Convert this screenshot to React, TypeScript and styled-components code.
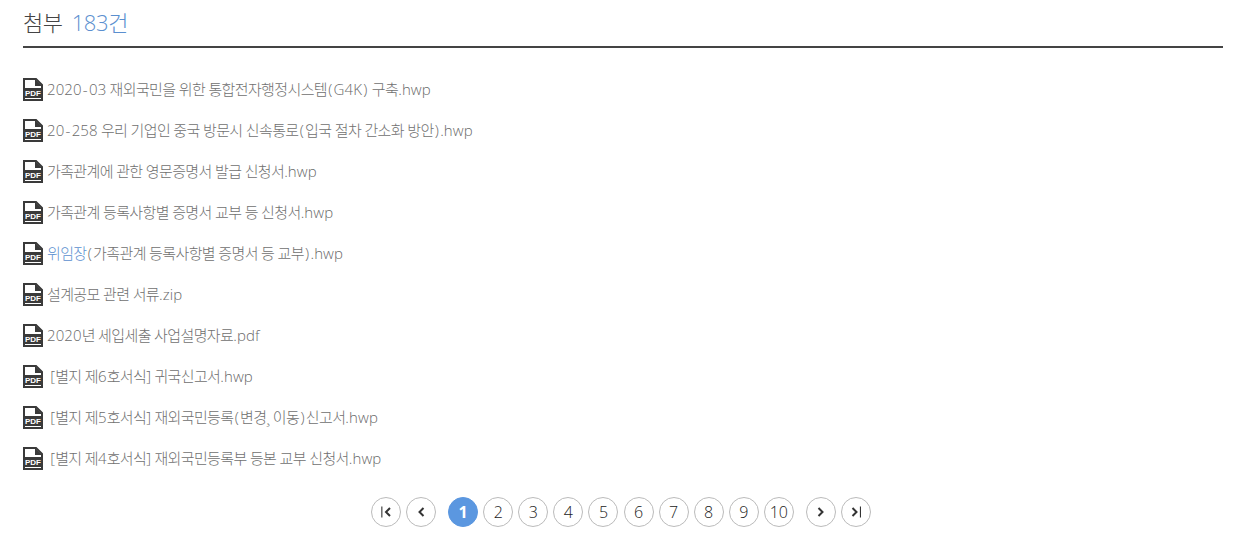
import React from "react";
import styled, { createGlobalStyle } from "styled-components";

const GlobalStyle = createGlobalStyle`
  html, body {
    margin: 0;
    padding: 0;
    background: #ffffff;
  }
`;

const Page = styled.div`
  box-sizing: border-box;
  width: 1243px;
  height: 546px;
  padding: 0 20px 0 23px;
  font-family: "Open Sans", "Noto Sans CJK KR", sans-serif;
  overflow: hidden;
`;

const Header = styled.h2`
  box-sizing: border-box;
  height: 48px;
  margin: 0;
  padding-top: 6px;
  border-bottom: 2px solid #444444;
  color: #444444;
  font-size: 22px;
  font-weight: 300;
  line-height: 32px;
  letter-spacing: -0.4px;
`;

const Count = styled.span`
  margin-left: 9px;
  color: #5b8fcf;
`;

const FileList = styled.ul`
  list-style: none;
  margin: 0;
  padding: 21px 0 0;
`;

const FileRow = styled.li`
  display: flex;
  align-items: center;
  gap: 4px;
  height: 41px;
  color: #707070;
  font-size: 15px;
  font-weight: 300;
`;

const FileName = styled.span`
  position: relative;
  top: -1px;
  white-space: pre;
  letter-spacing: -0.62px;
`;

const Latin = styled.span`
  color: #6a6a6a;
  letter-spacing: 0.1px;
`;

const Wide = styled(Latin)`
  padding: 0 1.2px;
`;

const Highlight = styled.span`
  color: #5b8fcf;
`;

const Pager = styled.nav`
  display: flex;
  justify-content: center;
  align-items: center;
  gap: 5.08px;
  margin-top: 18px;
  padding-right: 4px;
`;

const PageButton = styled.span<{ $active?: boolean }>`
  box-sizing: border-box;
  display: flex;
  align-items: center;
  justify-content: center;
  width: 30px;
  height: 30px;
  border: 1px solid ${(p) => (p.$active ? "#5b97e0" : "#bbbbbb")};
  border-radius: 50%;
  background: ${(p) => (p.$active ? "#5b97e0" : "#ffffff")};
  color: ${(p) => (p.$active ? "#ffffff" : "#222222")};
  font-size: 16px;
  font-weight: ${(p) => (p.$active ? 700 : 300)};
`;

const Spacer = styled.span`
  width: 7.4px;
  margin-left: -5px;
`;

const FileIcon = () => (
  <svg width="20" height="23" viewBox="0 0 20 23" style={{ flex: "none" }}>
    <path
      d="M1 1H13L19 7V22H1Z"
      fill="#fff"
      stroke="#3a3a3a"
      strokeWidth="2"
    />
    <path d="M12 1V8H19Z" fill="#3a3a3a" />
    <rect x="0" y="10" width="20" height="10" fill="#3a3a3a" />
    <text
      x="10"
      y="18"
      textAnchor="middle"
      fill="#fff"
      fontFamily="'Liberation Sans', sans-serif"
      fontSize="8"
      fontWeight="700"
    >
      PDF
    </text>
  </svg>
);

const Chevron = ({ dir, bar }: { dir: "left" | "right"; bar?: boolean }) => (
  <svg width="14" height="14" viewBox="0 0 14 14">
    {dir === "left" ? (
      <>
        <path
          d={bar ? "M11 3L7 7L11 11" : "M9.5 3L5.5 7L9.5 11"}
          fill="none"
          stroke="#333"
          strokeWidth="2"
        />
        {bar && <rect x="2.3" y="1.5" width="1.1" height="11" fill="#333" />}
      </>
    ) : (
      <>
        <path
          d={bar ? "M3.5 3L7.5 7L3.5 11" : "M4.5 3L8.5 7L4.5 11"}
          fill="none"
          stroke="#333"
          strokeWidth="2"
        />
        {bar && <rect x="10.9" y="1.5" width="1.1" height="11" fill="#333" />}
      </>
    )}
  </svg>
);

// Latin runs are set wider than the Hangul around them
const Mixed = ({ text }: { text: string }) => (
  <>
    {text.split(/([^\uAC00-\uD7A3\s]+)/).map((part, i) =>
      i % 2
        ? part.split(/([()\-])/).map((run, j) =>
            j % 2 ? <Wide key={`${i}-${j}`}>{run}</Wide> : <Latin key={`${i}-${j}`}>{run}</Latin>
          )
        : part
    )}
  </>
);

const files: { prefix?: string; name: string }[] = [
  { name: "2020-03 재외국민을 위한 통합전자행정시스템(G4K) 구축.hwp" },
  { name: "20-258 우리 기업인 중국 방문시 신속통로(입국 절차 간소화 방안).hwp" },
  { name: "가족관계에 관한 영문증명서 발급 신청서.hwp" },
  { name: "가족관계 등록사항별 증명서 교부 등 신청서.hwp" },
  { prefix: "위임장", name: "(가족관계 등록사항별 증명서 등 교부).hwp" },
  { name: "설계공모 관련 서류.zip" },
  { name: "2020년 세입세출 사업설명자료.pdf" },
  { name: " [별지 제6호서식] 귀국신고서.hwp" },
  { name: " [별지 제5호서식] 재외국민등록(변경¸ 이동)신고서.hwp" },
  { name: " [별지 제4호서식] 재외국민등록부 등본 교부 신청서.hwp" },
];

const pages = [1, 2, 3, 4, 5, 6, 7, 8, 9, 10];

export default function App() {
  return (
    <Page>
      <GlobalStyle />
      <Header>
        첨부<Count>183건</Count>
      </Header>
      <FileList>
        {files.map((file, i) => (
          <FileRow key={i}>
            <FileIcon />
            <FileName>
              {file.prefix && <Highlight>{file.prefix}</Highlight>}
              <Mixed text={file.name} />
            </FileName>
          </FileRow>
        ))}
      </FileList>
      <Pager>
        <PageButton>
          <Chevron dir="left" bar />
        </PageButton>
        <PageButton>
          <Chevron dir="left" />
        </PageButton>
        <Spacer />
        {pages.map((n) => (
          <PageButton key={n} $active={n === 1}>
            {n}
          </PageButton>
        ))}
        <Spacer />
        <PageButton>
          <Chevron dir="right" />
        </PageButton>
        <PageButton>
          <Chevron dir="right" bar />
        </PageButton>
      </Pager>
    </Page>
  );
}
